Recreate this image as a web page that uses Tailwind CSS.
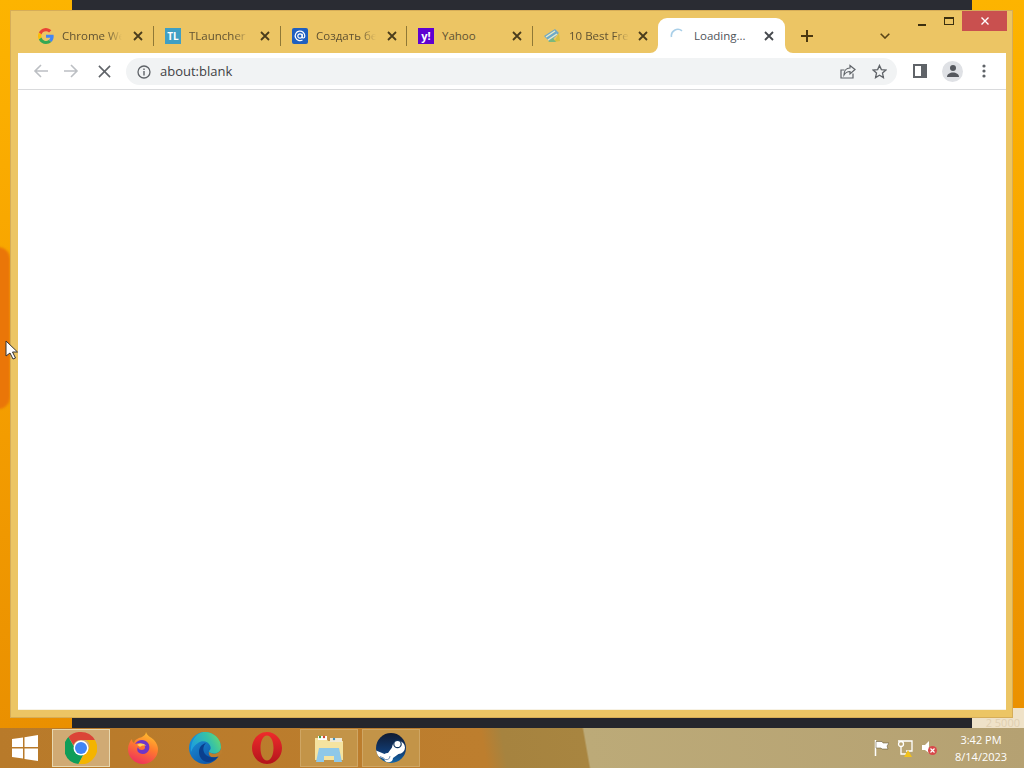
<!DOCTYPE html>
<html lang="en">
<head>
  <meta charset="UTF-8" />
  <title>Loading...</title>
  <script src="https://cdn.jsdelivr.net/npm/@tailwindcss/browser@4"></script>
</head>
<body class="w-[1024px] h-[768px] overflow-hidden font-['Open_Sans',sans-serif]">
  <div class="w-[1024px] h-[768px] flex flex-col">
    <!-- desktop -->
    <div class="relative h-[728px] overflow-hidden bg-[linear-gradient(180deg,#fdb400_0%,#f9a800_30%,#f39c00_60%,#ea9000_100%)]">
      <div class="absolute left-[-12px] top-[247px] w-[22px] h-[162px] rounded-r-[12px] bg-[#ea7608] blur-[1px]"></div>
      <div class="absolute left-[72px] top-0 w-[900px] h-[10px] bg-[#2a2c33]"></div>
      <div class="absolute left-[72px] top-[718px] w-[900px] h-[10px] bg-[#25262c]"></div>
      <div class="absolute left-[972px] top-[708px] w-[52px] h-[20px] bg-[#efe2c8] flex items-end justify-end pr-[4px] text-[11px] leading-[10px] text-[#dfcfb0]">2 5000</div>

      <!-- browser window -->
      <div class="absolute left-[10px] top-[10px] w-[1003px] h-[708px] bg-[#ecc564] border border-[#d6ad58] flex flex-col">
        <!-- tab strip -->
        <div class="relative h-[42px] shrink-0 pl-[16px] pt-[7px] flex items-stretch">
          <div class="w-[127px] h-[35px] flex items-center pl-[11px] text-[11.5px] text-[#5f5232]">
            <svg class="w-4 h-4 shrink-0" viewBox="0 0 24 24"><path fill="#ea4335" d="M12 5a7 7 0 0 1 4.600 1.800l3.400-3.400A11.800 11.800 0 0 0 1.300 6.700l4 3.100A7 7 0 0 1 12 5z"/><path fill="#4285f4" d="M23.500 12.300c0-.8-.1-1.600-.2-2.300H12v4.500h6.500a5.600 5.600 0 0 1-2.400 3.600l3.800 3c2.300-2.100 3.600-5.200 3.600-8.800z"/><path fill="#fbbc05" d="M5.300 14.200a7 7 0 0 1 0-4.400l-4-3.100a12 12 0 0 0 0 10.600z"/><path fill="#34a853" d="M12 24c3.200 0 6-1.100 7.900-2.900l-3.800-3a7 7 0 0 1-10.800-3.900l-4 3.100A12 12 0 0 0 12 24z"/></svg>
            <span class="ml-[8px] w-[60px] shrink-0 whitespace-nowrap [mask-image:linear-gradient(90deg,#000_75%,transparent)]">Chrome We</span>
            <svg class="w-[10px] h-[10px] ml-[11px] shrink-0" viewBox="0 0 10 10"><path d="M1 1l8 8M9 1l-8 8" stroke="#4a3c1c" stroke-width="1.800"/></svg>
            <div class="ml-[10px] w-px h-[20px] bg-[#8f7836] shrink-0"></div>
          </div>
          <div class="w-[127px] h-[35px] flex items-center pl-[11px] text-[11.5px] text-[#5f5232]">
            <div class="w-4 h-4 shrink-0 bg-[#3f9fc4] text-white font-bold text-[10px] leading-4 text-center">TL</div>
            <span class="ml-[8px] w-[60px] shrink-0 whitespace-nowrap [mask-image:linear-gradient(90deg,#000_75%,transparent)]">TLauncher -</span>
            <svg class="w-[10px] h-[10px] ml-[11px] shrink-0" viewBox="0 0 10 10"><path d="M1 1l8 8M9 1l-8 8" stroke="#4a3c1c" stroke-width="1.800"/></svg>
            <div class="ml-[10px] w-px h-[20px] bg-[#8f7836] shrink-0"></div>
          </div>
          <div class="w-[126px] h-[35px] flex items-center pl-[11px] text-[11.5px] text-[#5f5232]">
            <svg class="w-4 h-4 shrink-0" viewBox="0 0 16 16"><rect width="16" height="16" rx="2" fill="#1f5fc0"/><circle cx="8" cy="8" r="2.200" fill="none" stroke="#fff" stroke-width="1.200"/><path d="M10.200 5.800v3c0 1.800 2.600 1.600 2.600-.8A4.800 4.800 0 1 0 10.500 12" fill="none" stroke="#fff" stroke-width="1.200"/></svg>
            <span class="ml-[8px] w-[60px] shrink-0 whitespace-nowrap [mask-image:linear-gradient(90deg,#000_75%,transparent)]">Создать бе</span>
            <svg class="w-[10px] h-[10px] ml-[11px] shrink-0" viewBox="0 0 10 10"><path d="M1 1l8 8M9 1l-8 8" stroke="#4a3c1c" stroke-width="1.800"/></svg>
            <div class="ml-[9px] w-px h-[20px] bg-[#8f7836] shrink-0"></div>
          </div>
          <div class="w-[126px] h-[35px] flex items-center pl-[11px] text-[11.5px] text-[#5f5232]">
            <div class="w-4 h-4 shrink-0 bg-[#5f01d1] text-white font-bold text-[11px] leading-4 text-center">y!</div>
            <span class="ml-[8px] w-[60px] shrink-0 whitespace-nowrap">Yahoo</span>
            <svg class="w-[10px] h-[10px] ml-[10px] shrink-0" viewBox="0 0 10 10"><path d="M1 1l8 8M9 1l-8 8" stroke="#4a3c1c" stroke-width="1.800"/></svg>
            <div class="ml-[10px] w-px h-[20px] bg-[#8f7836] shrink-0"></div>
          </div>
          <div class="w-[125px] h-[35px] flex items-center pl-[11px] text-[11.5px] text-[#5f5232]">
            <svg class="w-4 h-4 shrink-0" viewBox="0 0 16 16"><path d="M0 8l11-7 4 4-9 9z" fill="#6fa9c8"/><path d="M2 9l9-6M4 12l9-6" stroke="#e8ecc8" stroke-width="1.500"/><path d="M10 14l5-9 1 8z" fill="#d8c040"/><path d="M4 14l5-4 3 4z" fill="#7cb87c"/></svg>
            <span class="ml-[9px] w-[60px] shrink-0 whitespace-nowrap [mask-image:linear-gradient(90deg,#000_75%,transparent)]">10 Best Fre</span>
            <svg class="w-[10px] h-[10px] ml-[9px] shrink-0" viewBox="0 0 10 10"><path d="M1 1l8 8M9 1l-8 8" stroke="#4a3c1c" stroke-width="1.800"/></svg>
          </div>
          <div class="relative w-[127px] h-[35px] flex items-center pl-[12px] bg-white rounded-t-[9px] text-[11.5px] text-[#50545a]">
            <svg class="absolute left-[-8px] bottom-0 w-2 h-2" viewBox="0 0 8 8"><path d="M8 0v8H0a8 8 0 0 0 8-8z" fill="#fff"/></svg>
            <svg class="absolute right-[-8px] bottom-0 w-2 h-2" viewBox="0 0 8 8"><path d="M0 0v8h8a8 8 0 0 1-8-8z" fill="#fff"/></svg>
            <svg class="w-4 h-4 shrink-0" viewBox="0 0 16 16"><path d="M1.500 9A6.500 6.500 0 0 1 12 2.800" fill="none" stroke="#a9cfe8" stroke-width="1.600"/></svg>
            <span class="ml-[8px] w-[60px] shrink-0 whitespace-nowrap">Loading...</span>
            <svg class="w-[10px] h-[10px] ml-[10px] shrink-0" viewBox="0 0 10 10"><path d="M1 1l8 8M9 1l-8 8" stroke="#45484d" stroke-width="1.800"/></svg>
          </div>
          <svg class="w-3 h-3 ml-[16px] mt-[12px] shrink-0" viewBox="0 0 12 12"><path d="M6 0v12M0 6h12" stroke="#4a3710" stroke-width="2"/></svg>
          <svg class="w-[10px] h-[6px] ml-[67px] mt-[15px] shrink-0" viewBox="0 0 10 6"><path d="M.7.7L5 5 9.300.7" fill="none" stroke="#5a4516" stroke-width="1.600"/></svg>
          <!-- window controls -->
          <div class="absolute right-[5px] top-0 flex items-start">
            <div class="w-[8px] h-[2px] mt-[13px] mr-[18px] bg-[#3c3010]"></div>
            <div class="w-[10px] h-[8px] mt-[6px] mr-[8px] border border-t-2 border-[#3c3010]"></div>
            <div class="w-[45px] h-[20px] bg-[#c9504f] flex items-center justify-center">
              <svg class="w-[8px] h-[8px]" viewBox="0 0 8 8"><path d="M0.500 0.500l7 7M7.500 0.500l-7 7" stroke="#fff" stroke-width="1.400"/></svg>
            </div>
          </div>
        </div>
        <!-- toolbar and page -->
        <div class="ml-[7px] mr-[6px] mb-[7px] flex-1 bg-white border-b border-[#f7f2e4] flex flex-col">
          <div class="h-[37px] shrink-0 border-b border-[#d9dadc] flex items-center">
            <svg class="w-[15px] h-[16px] ml-[15px] shrink-0" viewBox="0 0 15 16"><path d="M15 8H2M8 2L2 8l6 6" fill="none" stroke="#bcbfc3" stroke-width="1.600"/></svg>
            <svg class="w-[15px] h-[16px] ml-[16px] shrink-0" viewBox="0 0 15 16"><path d="M0 8h13M7 2l6 6-6 6" fill="none" stroke="#bcbfc3" stroke-width="1.600"/></svg>
            <svg class="w-[13px] h-[13px] ml-[19px] shrink-0" viewBox="0 0 14 14"><path d="M1 1l12 12M13 1L1 13" stroke="#5f6368" stroke-width="1.700"/></svg>
            <div class="ml-[15px] mt-px w-[771px] h-[27px] rounded-full bg-[#f1f3f4] flex items-center pr-[10px] shrink-0">
              <svg class="w-[14px] h-[14px] ml-[11px] shrink-0" viewBox="0 0 14 14"><circle cx="7" cy="7" r="6" fill="none" stroke="#5f6368" stroke-width="1.300"/><path d="M7 6v4.500M7 3.500v1.500" stroke="#5f6368" stroke-width="1.400"/></svg>
              <span class="ml-[9px] text-[13px] text-[#3f4145]">about:blank</span>
              <div class="flex-1"></div>
              <svg class="w-[16px] h-[16px] shrink-0" viewBox="0 0 16 16"><path d="M13 9.500V14H1V6h3.500" fill="none" stroke="#5f6368" stroke-width="1.200"/><path d="M15 5.500L10 1.500v2.500C6 4 4 7 4 11c1.500-2.500 3.500-3.500 6-3.500v2.500z" fill="none" stroke="#5f6368" stroke-width="1.200"/></svg>
              <svg class="w-[15px] h-[15px] ml-[16px] shrink-0" viewBox="0 0 16 16"><path d="M8 1.500l2 4.500 4.800.5-3.600 3.200 1 4.800L8 12l-4.200 2.500 1-4.800L1.200 6.500 6 6z" fill="none" stroke="#5f6368" stroke-width="1.400"/></svg>
            </div>
            <div class="ml-[16px] w-[14px] h-[14px] border-2 border-r-[6px] border-[#5f6368] shrink-0"></div>
            <div class="ml-[15px] w-[21px] h-[21px] rounded-full bg-[#dfe1e5] flex items-center justify-center shrink-0">
              <svg class="w-[14px] h-[14px]" viewBox="0 0 14 14"><circle cx="7" cy="4" r="3" fill="#55585e"/><path d="M1 13c0-3 3-4.500 6-4.500s6 1.500 6 4.500z" fill="#55585e"/></svg>
            </div>
            <svg class="w-[4px] h-[14px] ml-[19px] shrink-0" viewBox="0 0 4 14"><circle cx="2" cy="2" r="1.600" fill="#5f6368"/><circle cx="2" cy="7" r="1.600" fill="#5f6368"/><circle cx="2" cy="12" r="1.600" fill="#5f6368"/></svg>
          </div>
          <div class="flex-1"></div>
        </div>
      </div>

      <!-- mouse pointer -->
      <svg class="absolute left-[5px] top-[340px] w-[14px] h-[20px]" viewBox="0 0 14 20"><path d="M1 1v15l4-3 3 6 2.500-1-3-6h5z" fill="#fff" stroke="#333" stroke-width="1"/></svg>
    </div>

    <!-- taskbar -->
    <div class="h-[40px] shrink-0 flex items-center bg-[linear-gradient(80deg,#b87a2a_0px,#bd7e2e_480px,#a6833f_500px,#a88540_580px,#bcaa78_582px,#b5a172_100%)]">
      <svg class="w-[26px] h-[26px] ml-[12px] shrink-0" viewBox="0 0 26 26"><path fill="#fff" d="M0 4l11-1.500V12H0zM12.500 2.300L26 0v12H12.500zM0 13.500h11v10L0 22zM12.500 13.500H26V26l-13.500-2z"/></svg>
      <div class="ml-[14px] w-[58px] h-[38px] border border-[#e8d8b0] bg-[#d0aa74] flex items-center justify-center shrink-0">
        <svg class="w-[32px] h-[32px]" viewBox="0 0 32 32"><path fill="#db4437" d="M16 0a16 16 0 0 1 13.900 8H16a8 8 0 0 0-7.500 5L3.400 5A16 16 0 0 1 16 0z"/><path fill="#0f9d58" d="M3.400 5l6.900 12a6.500 6.500 0 0 0 8 5.500L13.500 32A16 16 0 0 1 3.400 5z"/><path fill="#f4b400" d="M29.900 8A16 16 0 0 1 13.500 32l6.900-12a6.500 6.500 0 0 0 0-12z"/><circle cx="16" cy="16" r="7.500" fill="#fff"/><circle cx="16" cy="16" r="6" fill="#4285f4"/></svg>
      </div>
      <svg class="w-[30px] h-[32px] ml-[18px] shrink-0" viewBox="0 0 30 32">
        <defs><linearGradient id="ff" x1="0.700" y1="0" x2="0.300" y2="1"><stop offset="0" stop-color="#ffc22e"/><stop offset=".45" stop-color="#ff7a2e"/><stop offset="1" stop-color="#ee2f5e"/></linearGradient></defs>
        <path d="M18 0c1 4 5 5 8 8 3 3 4 7 4 9a15 15 0 0 1-30 0C0 13 2 9 4 7c0 2 .5 3 2 4 1-4 5-5 8-6 2-1 4-3 4-5z" fill="url(#ff)"/>
        <path d="M7 12c3-5 10-5 13-1 3 4 1 11-5 11-5 0-7-4-5-7 0 2 2 3 4 3 3 0 4-3 2-5-3-2-6-2-9-1z" fill="#6f36c8"/>
        <path d="M9 13c3-2 7-2 9 1-3-1-5 0-6 1-1-1-2-2-3-2z" fill="#ffd35c"/>
      </svg>
      <svg class="w-[34px] h-[32px] ml-[30px] shrink-0" viewBox="0 0 32 32">
        <defs>
          <linearGradient id="eb" x1="0" y1="0" x2="0.800" y2="1"><stop offset="0" stop-color="#1d9ade"/><stop offset="1" stop-color="#0c4fa4"/></linearGradient>
          <linearGradient id="eg" x1="0" y1="0.600" x2="1" y2="0.200"><stop offset="0" stop-color="#1e9fdc"/><stop offset=".6" stop-color="#35c1a8"/><stop offset="1" stop-color="#6cdc6a"/></linearGradient>
        </defs>
        <circle cx="16" cy="16" r="16" fill="url(#eb)"/>
        <path d="M32 15c0 4-3 6.500-7 6.500-2 0-4-.5-5-2-1 3 1 5.500 4 6 2 .3 4 0 6-1L34 20z" fill="#bc7e2e"/>
        <path d="M16 0C25 0 32 7 32 15c0 4-3 6.500-7 6.500-3 0-5-1-5-2.500 2-1.500 2-3.500 1-5.500C19 9 13 8 9 11 5 13.500 3 17 2 20 1 10 7 0 16 0z" fill="url(#eg)"/>
        <path d="M10 20c0-5 3-8 7-9-3 3-4 8 0 12 3 2.500 7 3 12 1.500-3 4-8 6-11 5.500-5-1-8-5-8-10z" fill="#0a3f8e"/>
      </svg>
      <svg class="w-[30px] h-[32px] ml-[30px] shrink-0" viewBox="0 0 30 32">
        <defs><linearGradient id="op" x1="0" y1="0" x2="0" y2="1"><stop offset="0" stop-color="#ef2b2b"/><stop offset="1" stop-color="#b3141c"/></linearGradient></defs>
        <path fill-rule="evenodd" d="M15 0c8.300 0 15 7.200 15 16s-6.700 16-15 16S0 24.800 0 16 6.700 0 15 0zm0 3.500c-4 0-6.500 5.600-6.500 12.500S11 28.500 15 28.500s6.500-5.600 6.500-12.500S19 3.500 15 3.500z" fill="url(#op)"/>
      </svg>
      <div class="ml-[18px] w-[58px] h-[38px] border border-[#cfa664] bg-[#c39448] flex items-center justify-center shrink-0">
        <svg class="w-[30px] h-[28px]" viewBox="0 0 30 28"><path d="M1 4h11l2 3h15v19H1z" fill="#f5e3a0"/><path d="M4 2h9v4H4z" fill="#fff"/><path d="M16 4h12v4H16z" fill="#efe9d6"/><circle cx="6" cy="3" r="1.200" fill="#3ca03c"/><circle cx="10" cy="3" r="1.200" fill="#d04030"/><circle cx="20" cy="5" r="1.200" fill="#3f8fc0"/><path fill-rule="evenodd" d="M5 14h20l3 14h-8v-6H10v6H2z" fill="#8fc8e8"/></svg>
      </div>
      <div class="ml-[4px] w-[58px] h-[38px] border border-[#cfa664] bg-[#c39448] flex items-center justify-center shrink-0">
        <svg class="w-[30px] h-[30px]" viewBox="0 0 30 30">
          <defs>
            <linearGradient id="st" x1="0" y1="0" x2="0" y2="1"><stop offset="0" stop-color="#111a30"/><stop offset=".6" stop-color="#103a70"/><stop offset="1" stop-color="#1466a8"/></linearGradient>
            <clipPath id="sc"><circle cx="15" cy="15" r="15"/></clipPath>
          </defs>
          <circle cx="15" cy="15" r="15" fill="url(#st)"/>
          <g clip-path="url(#sc)">
            <path d="M-1 17l9.500 4c1-.8 2.200-1.100 3.500-1l4-5.500a6.500 6.500 0 1 1 6.500 6.500l-5.500 4a4.500 4.500 0 0 1-8.800 1L-1 22z" fill="#fff"/>
          </g>
          <circle cx="21.500" cy="11" r="4.300" fill="#123660"/>
          <circle cx="21.500" cy="11" r="3.100" fill="#fff"/>
          <path d="M4 23.500l3.500 1.500a3.500 3.500 0 0 0 6.500-2" fill="none" stroke="#1a4a80" stroke-width=".6"/>
        </svg>
      </div>
      <svg class="w-[15px] h-[16px] ml-[454px] shrink-0" viewBox="0 0 15 16"><path d="M1.500 0v16" stroke="#fff" stroke-width="1.500"/><path d="M2 1.500h6l1 1.500h6l-2 3 1 3H8L7 8H2z" fill="#fff" stroke="#55482a" stroke-width=".5"/></svg>
      <svg class="w-[17px] h-[17px] ml-[8px] shrink-0" viewBox="0 0 17 17"><path d="M1 1h14v10H9" fill="none" stroke="#fff" stroke-width="1.300"/><circle cx="4" cy="4" r="2.500" fill="none" stroke="#fff" stroke-width="1.300"/><path d="M4 6v8h5" fill="none" stroke="#fff" stroke-width="1.300"/><path d="M11 10l4 7H7z" fill="#f2c21c"/></svg>
      <svg class="w-[17px] h-[16px] ml-[7px] shrink-0" viewBox="0 0 17 16"><path d="M1 5h3l4-4v12L4 10H1z" fill="#fff"/><circle cx="11.500" cy="10.500" r="4.500" fill="#d8484a"/><path d="M9.500 8.500l4 4M13.500 8.500l-4 4" stroke="#fff" stroke-width="1.200"/></svg>
      <div class="ml-[17px] w-[52px] text-center text-[11px] leading-[17px] text-white whitespace-nowrap shrink-0">
        <div>3:42 PM</div>
        <div>8/14/2023</div>
      </div>
    </div>
  </div>
</body>
</html>
